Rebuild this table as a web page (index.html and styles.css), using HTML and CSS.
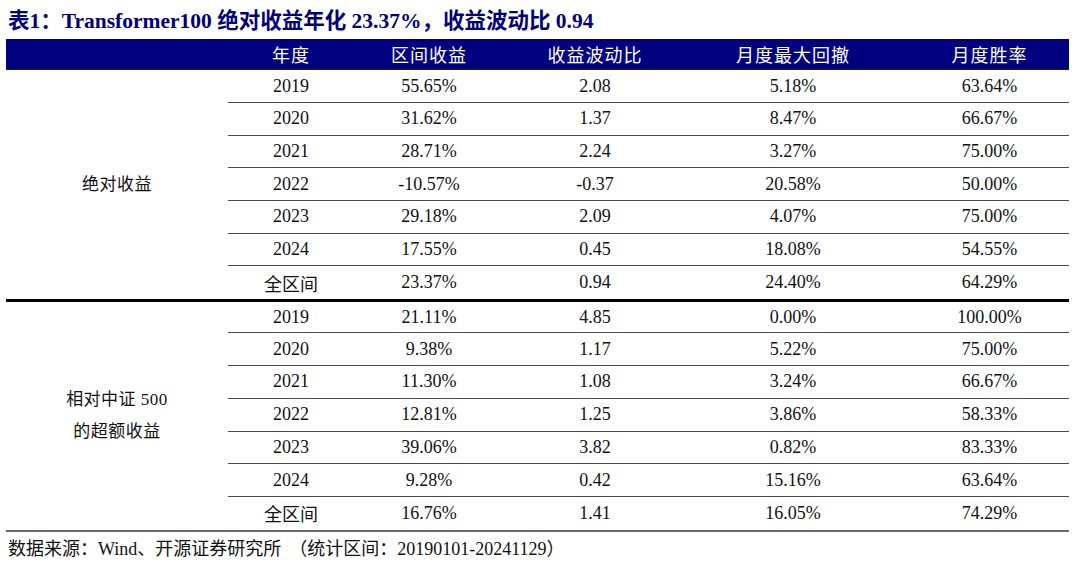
FILE: index.html
```html
<!DOCTYPE html>
<html lang="zh-CN">
<head>
<meta charset="utf-8">
<title>表1</title>
<link rel="stylesheet" href="styles.css">
</head>
<body>
<div class="page">
  <h1 class="title">表1：Transformer100 绝对收益年化 23.37%，收益波动比 0.94</h1>
  <div class="table">
    <div class="head">
      <div class="hc"></div>
      <div class="hc">年度</div>
      <div class="hc">区间收益</div>
      <div class="hc">收益波动比</div>
      <div class="hc">月度最大回撤</div>
      <div class="hc last">月度胜率</div>
    </div>
    <div class="group g1">
      <div class="label">绝对收益</div>
      <div class="c">2019</div><div class="c">55.65%</div><div class="c">2.08</div><div class="c">5.18%</div><div class="c last">63.64%</div>
      <div class="c">2020</div><div class="c">31.62%</div><div class="c">1.37</div><div class="c">8.47%</div><div class="c last">66.67%</div>
      <div class="c">2021</div><div class="c">28.71%</div><div class="c">2.24</div><div class="c">3.27%</div><div class="c last">75.00%</div>
      <div class="c">2022</div><div class="c">-10.57%</div><div class="c">-0.37</div><div class="c">20.58%</div><div class="c last">50.00%</div>
      <div class="c">2023</div><div class="c">29.18%</div><div class="c">2.09</div><div class="c">4.07%</div><div class="c last">75.00%</div>
      <div class="c">2024</div><div class="c">17.55%</div><div class="c">0.45</div><div class="c">18.08%</div><div class="c last">54.55%</div>
      <div class="c end">全区间</div><div class="c end">23.37%</div><div class="c end">0.94</div><div class="c end">24.40%</div><div class="c end last">64.29%</div>
    </div>
    <div class="group g2">
      <div class="label">相对中证 500<br>的超额收益</div>
      <div class="c">2019</div><div class="c">21.11%</div><div class="c">4.85</div><div class="c">0.00%</div><div class="c last">100.00%</div>
      <div class="c">2020</div><div class="c">9.38%</div><div class="c">1.17</div><div class="c">5.22%</div><div class="c last">75.00%</div>
      <div class="c">2021</div><div class="c">11.30%</div><div class="c">1.08</div><div class="c">3.24%</div><div class="c last">66.67%</div>
      <div class="c">2022</div><div class="c">12.81%</div><div class="c">1.25</div><div class="c">3.86%</div><div class="c last">58.33%</div>
      <div class="c">2023</div><div class="c">39.06%</div><div class="c">3.82</div><div class="c">0.82%</div><div class="c last">83.33%</div>
      <div class="c">2024</div><div class="c">9.28%</div><div class="c">0.42</div><div class="c">15.16%</div><div class="c last">63.64%</div>
      <div class="c end">全区间</div><div class="c end">16.76%</div><div class="c end">1.41</div><div class="c end">16.05%</div><div class="c end last">74.29%</div>
    </div>
  </div>
  <p class="source">数据来源：Wind、开源证券研究所<span class="paren">（</span>统计区间：20190101-20241129）</p>
</div>
</body>
</html>
```
FILE: styles.css
```css
html, body {
  margin: 0;
  padding: 0;
  background: #ffffff;
}

.page {
  width: 1080px;
  height: 570px;
  padding: 0 11px 0 6px;
  box-sizing: border-box;
  font-family: "Liberation Serif", "Noto Sans CJK SC", serif;
  color: #111111;
}

.title {
  margin: 0;
  height: 39px;
  padding: 8px 0 0 2px;
  box-sizing: border-box;
  font-size: 21.5px;
  line-height: 26px;
  font-weight: bold;
  color: #00007a;
  white-space: nowrap;
}

.table {
  width: 1063px;
}

.head,
.group {
  display: grid;
  grid-template-columns: 222px 126px 150px 182px 214px 169px;
}

.head {
  height: 31px;
  background: #000080;
  border-bottom: 1px solid #1c1c30;
  box-sizing: border-box;
}

.hc {
  display: flex;
  align-items: center;
  justify-content: center;
  color: #ffffff;
  font-size: 18px;
  letter-spacing: 1px;
}

.last {
  padding-left: 10px;
}

.g1 {
  grid-template-rows: 33px repeat(5, 32.7px) 35.5px;
}

.g2 {
  grid-template-rows: 31.5px repeat(5, 32.7px) 35px;
}

.c {
  display: flex;
  align-items: center;
  justify-content: center;
  font-size: 18px;
  border-bottom: 1px solid #4a4a4a;
  box-sizing: border-box;
}

.label {
  grid-row: 1 / span 7;
  display: flex;
  align-items: center;
  justify-content: center;
  text-align: center;
  font-size: 17px;
  line-height: 32px;
  letter-spacing: 0.5px;
}

.g1 .label,
.g1 .end {
  border-bottom: 3px solid #000000;
}

.g2 .label,
.g2 .end {
  border-bottom: 2px solid #6a6a6a;
}

.g1 .label {
  padding-top: 2px;
}

.source {
  margin: 0;
  padding: 5px 0 0 2px;
  font-size: 18px;
  line-height: 24px;
  white-space: nowrap;
}

.paren {
  margin-left: 8px;
}
```
